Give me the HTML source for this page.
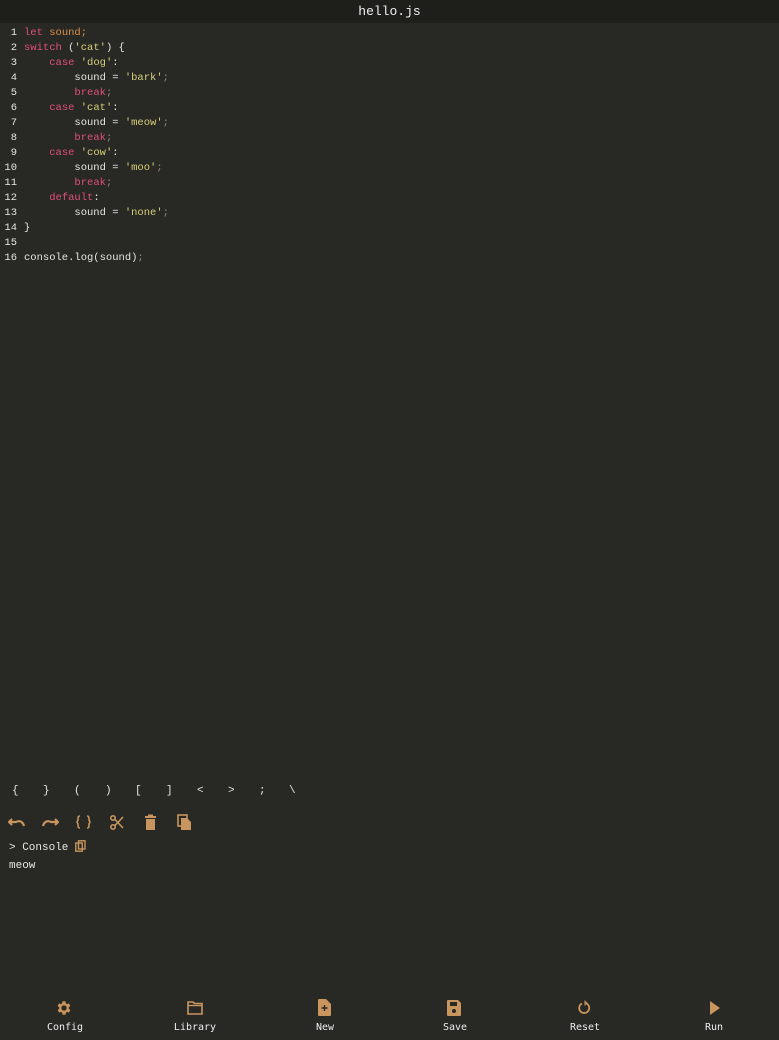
<!DOCTYPE html>
<html><head><meta charset="utf-8"><style>
*{margin:0;padding:0;box-sizing:border-box}
body{width:779px;height:1040px;background:#282824;font-family:"Liberation Mono",monospace;color:#e6e6e2;position:relative;overflow:hidden}
.hdr{position:absolute;top:0;left:0;width:779px;height:23px;background:#1e1e1b;text-align:center;font-size:13px;line-height:23px;color:#f0f0f0}
.code{position:absolute;top:26px;left:0;font-size:10.5px;line-height:15px;white-space:pre}
.ln{display:inline-block;width:17px;text-align:right;color:#e6e6e2;margin-right:7px}
.k{color:#e0507a}.o{color:#d8904a}.s{color:#d6d07a}.p{color:#8a8a80}
.keys{position:absolute;top:783px;left:0;font-size:11px}
.keys span{position:absolute;color:#e6e6e2}
.tb svg,.nav svg{position:absolute}
.con{position:absolute;top:840px;left:9px;font-size:11px;line-height:14px}
.out{position:absolute;top:860px;left:9px;font-size:11px}
.nav{position:absolute;top:995px;left:0;width:779px;height:45px}
.nav .l{position:absolute;top:27px;font-size:10px;color:#eee;transform:translateX(-50%);font-family:"DejaVu Sans Mono",monospace}
</style></head><body>
<div class="hdr">hello.js</div>
<div class="code"><div><span class="ln">1</span><span class="k">let</span> <span class="o">sound;</span></div><div><span class="ln">2</span><span class="k">switch</span> (<span class="s">'cat'</span>) {</div><div><span class="ln">3</span>    <span class="k">case</span> <span class="s">'dog'</span>:</div><div><span class="ln">4</span>        sound = <span class="s">'bark'</span><span class="p">;</span></div><div><span class="ln">5</span>        <span class="k">break</span><span class="p">;</span></div><div><span class="ln">6</span>    <span class="k">case</span> <span class="s">'cat'</span>:</div><div><span class="ln">7</span>        sound = <span class="s">'meow'</span><span class="p">;</span></div><div><span class="ln">8</span>        <span class="k">break</span><span class="p">;</span></div><div><span class="ln">9</span>    <span class="k">case</span> <span class="s">'cow'</span>:</div><div><span class="ln">10</span>        sound = <span class="s">'moo'</span><span class="p">;</span></div><div><span class="ln">11</span>        <span class="k">break</span><span class="p">;</span></div><div><span class="ln">12</span>    <span class="k">default</span>:</div><div><span class="ln">13</span>        sound = <span class="s">'none'</span><span class="p">;</span></div><div><span class="ln">14</span>}</div><div><span class="ln">15</span></div><div><span class="ln">16</span>console.log(sound)<span class="p">;</span></div></div>
<div class="keys" style="top:785px"><span style="left:12px">{</span><span style="left:43px">}</span><span style="left:74px">(</span><span style="left:105px">)</span><span style="left:135px">[</span><span style="left:166px">]</span><span style="left:197px">&lt;</span><span style="left:228px">&gt;</span><span style="left:259px">;</span><span style="left:289px">\</span></div>
<div class="tb">
<svg style="left:8px;top:815px" width="18" height="14" viewBox="0 0 18 14"><path d="M4 4 L1 7 L4 10 M1 7 H8 C12 5 15 7 16 11" fill="none" stroke="#c8955e" stroke-width="2.2"/></svg>
<svg style="left:41px;top:815px" width="18" height="14" viewBox="0 0 18 14"><path d="M14 4 L17 7 L14 10 M17 7 H10 C6 5 3 7 2 11" fill="none" stroke="#c8955e" stroke-width="2.2"/></svg>
<svg style="left:76px;top:815px" width="15" height="14" viewBox="0 0 15 14"><path d="M4 1 C2 1 2 2 2 5 L1 7 L2 9 C2 12 2 13 4 13 M11 1 C13 1 13 2 13 5 L14 7 L13 9 C13 12 13 13 11 13" fill="none" stroke="#c8955e" stroke-width="1.6"/></svg>
<svg style="left:110px;top:815px" width="14" height="15" viewBox="0 0 14 15"><circle cx="3" cy="3" r="2.2" fill="none" stroke="#c8955e" stroke-width="1.6"/><circle cx="3" cy="12" r="2.2" fill="none" stroke="#c8955e" stroke-width="1.6"/><path d="M5 4.5 L13 13 M5 10.5 L13 2" stroke="#c8955e" stroke-width="1.6"/></svg>
<svg style="left:144px;top:814px" width="13" height="16" viewBox="0 0 13 16"><rect x="4" y="0.5" width="5" height="2" fill="#c8955e"/><rect x="1" y="2" width="11" height="2" fill="#c8955e"/><rect x="2" y="5" width="9" height="11" fill="#c8955e"/></svg>
<svg style="left:177px;top:814px" width="15" height="16" viewBox="0 0 15 16"><rect x="1" y="1" width="9" height="11" fill="none" stroke="#c8955e" stroke-width="1.6"/><path d="M4 4 H10 L14 8 V16 H4 Z" fill="#c8955e"/></svg>
</div>
<div class="con">&gt; Console <svg style="vertical-align:-2px" width="11" height="12" viewBox="0 0 11 12"><rect x="0.8" y="3" width="6.5" height="8.2" fill="none" stroke="#c8955e" stroke-width="1.4"/><rect x="3.5" y="0.8" width="6.5" height="8.2" fill="none" stroke="#c8955e" stroke-width="1.4"/></svg></div>
<div class="out">meow</div>
<div class="nav">
<svg style="left:55px;top:4px" width="18" height="18" viewBox="0 0 24 24"><path fill="#c8955e" d="M19.4 13a7.5 7.5 0 000-2l2.1-1.6-2-3.5-2.5 1a7.3 7.3 0 00-1.7-1L15 3h-4l-.4 2.9a7.3 7.3 0 00-1.7 1l-2.5-1-2 3.5L6.6 11a7.5 7.5 0 000 2l-2.1 1.6 2 3.5 2.5-1a7.3 7.3 0 001.7 1L11 21h4l.4-2.9a7.3 7.3 0 001.7-1l2.5 1 2-3.5zM13 15.5A3.5 3.5 0 1113 8.5a3.5 3.5 0 010 7z" transform="translate(-1 0)"/></svg>
<div class="l" style="left:65px">Config</div>
<svg style="left:187px;top:6px" width="16" height="14" viewBox="0 0 16 14"><path d="M1 1 H6 L7.5 2.5 H15 V13 H1 Z" fill="none" stroke="#c8955e" stroke-width="1.6"/><path d="M1 4.5 H15" stroke="#c8955e" stroke-width="1.4"/></svg>
<div class="l" style="left:195px">Library</div>
<svg style="left:318px;top:4px" width="13" height="17" viewBox="0 0 13 17"><path d="M0 1 A1 1 0 011 0 H8 L13 5 V16 A1 1 0 0112 17 H1 A1 1 0 010 16 Z" fill="#c8955e"/><path d="M6.5 6 V12 M3.5 9 H9.5" stroke="#282824" stroke-width="1.4"/></svg>
<div class="l" style="left:325px">New</div>
<svg style="left:447px;top:5px" width="14" height="16" viewBox="0 0 14 16"><path d="M0 1 A1 1 0 011 0 H11 L14 3 V15 A1 1 0 0113 16 H1 A1 1 0 010 15 Z" fill="#c8955e"/><rect x="3" y="2" width="7" height="4" fill="#282824"/><circle cx="7" cy="11" r="2" fill="#282824"/></svg>
<div class="l" style="left:455px">Save</div>
<svg style="left:578px;top:5px" width="13" height="16" viewBox="0 0 13 16"><path d="M4 3.5 A5 5 0 106.5 3" fill="none" stroke="#c8955e" stroke-width="1.8"/><path d="M6.5 0 L9.5 3 L6.5 6 Z" fill="#c8955e"/></svg>
<div class="l" style="left:585px">Reset</div>
<svg style="left:710px;top:6px" width="10" height="14" viewBox="0 0 10 14"><path d="M0 0 L10 7 L0 14 Z" fill="#c8955e"/></svg>
<div class="l" style="left:714px">Run</div>
</div>
</body></html>
